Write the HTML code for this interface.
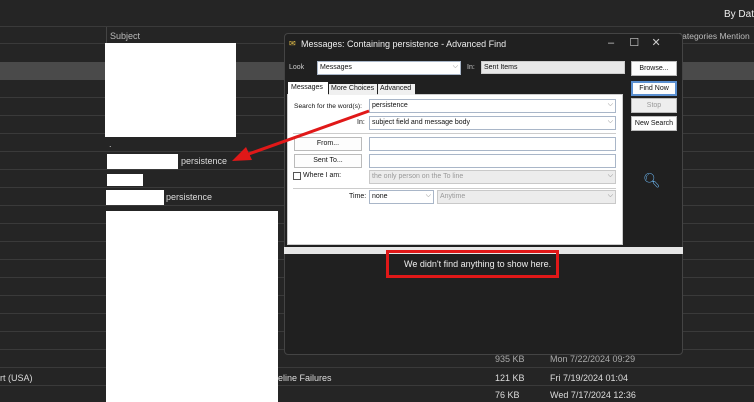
<!DOCTYPE html><html><head><style>
*{margin:0;padding:0;box-sizing:border-box}
body{width:754px;height:402px;background:#252525;position:relative;overflow:hidden;font-family:"Liberation Sans",sans-serif;font-size:9px;color:#ddd}
.a{position:absolute;white-space:nowrap}
.line{position:absolute;left:0;width:754px;height:1px;background:#3a3a3a}
.w{position:absolute;background:#fff}
.d{color:#111;font-size:7px}
.f{position:absolute;background:#fff;border:1px solid #a9b6c8;color:#111;font-size:7px;padding:1px 2px;line-height:10px;white-space:nowrap}
.g{background:#ececec;color:#999;border-color:#c9c9c9}
.b{position:absolute;background:#fdfdfd;border:1px solid #bbb;color:#111;font-size:7px;text-align:center;line-height:13px;white-space:nowrap}
.chev{position:absolute;right:2px;top:0;color:#777;font-size:7px}
</style></head><body>
<div class="a" style="right:0;top:9px;font-size:10px;color:#eee">By Dat</div>
<div class="line" style="top:26px"></div>
<div class="a" style="left:106px;top:27px;width:1px;height:16px;background:#444"></div>
<div class="a" style="left:110px;top:31px;color:#bbb">Subject</div>
<div class="a" style="left:676px;top:31px;color:#bbb;font-size:8.5px">Categories Mention</div>
<div class="line" style="top:43px"></div>
<div class="a" style="left:0;top:62px;width:754px;height:18px;background:#4a4a4a"></div>
<div class="line" style="top:97px"></div><div class="line" style="top:115px"></div><div class="line" style="top:133px"></div><div class="line" style="top:151px"></div><div class="line" style="top:169px"></div><div class="line" style="top:187px"></div><div class="line" style="top:205px"></div><div class="line" style="top:223px"></div><div class="line" style="top:241px"></div><div class="line" style="top:259px"></div><div class="line" style="top:277px"></div><div class="line" style="top:295px"></div><div class="line" style="top:313px"></div><div class="line" style="top:331px"></div><div class="line" style="top:349px"></div><div class="line" style="top:367px"></div><div class="line" style="top:385px"></div>
<div class="w" style="left:105px;top:43px;width:131px;height:94px"></div>
<div class="a" style="left:109px;top:139px;color:#ccc">.</div>
<div class="w" style="left:107px;top:154px;width:71px;height:15px"></div>
<div class="a" style="left:181px;top:156px">persistence</div>
<div class="w" style="left:107px;top:174px;width:36px;height:12px"></div>
<div class="w" style="left:106px;top:190px;width:58px;height:15px"></div>
<div class="a" style="left:166px;top:192px">persistence</div>
<div class="w" style="left:106px;top:211px;width:172px;height:191px"></div>
<div class="a" style="left:495px;top:354px;color:#aaa">935 KB</div>
<div class="a" style="left:550px;top:354px;color:#aaa">Mon 7/22/2024 09:29</div>
<div class="a" style="left:0;top:373px">rt (USA)</div>
<div class="a" style="left:278px;top:373px">eline Failures</div>
<div class="a" style="left:495px;top:373px">121 KB</div>
<div class="a" style="left:550px;top:373px">Fri 7/19/2024 01:04</div>
<div class="a" style="left:495px;top:390px">76 KB</div>
<div class="a" style="left:550px;top:390px">Wed 7/17/2024 12:36</div>
<!-- dialog -->
<div class="a" style="left:284px;top:33px;width:399px;height:322px;background:#202020;border:1px solid #444;border-radius:4px"></div>
<div class="a" style="left:289px;top:39px;color:#e6c04a;font-size:8px">✉</div>
<div class="a" style="left:301px;top:39px;color:#eee;font-size:9px">Messages: Containing persistence - Advanced Find</div>
<div class="a" style="left:608px;top:36px;color:#ccc;font-size:11px">–&nbsp;&nbsp;&nbsp;&nbsp;&nbsp;☐&nbsp;&nbsp;&nbsp;&nbsp;✕</div>
<div class="a" style="left:289px;top:64px;color:#ccc;font-size:7px">Look</div>
<div class="f" style="left:317px;top:61px;width:144px;height:14px">Messages<span class="chev">⌵</span></div>
<div class="a" style="left:467px;top:64px;color:#ccc;font-size:7px">In:</div>
<div class="f" style="left:481px;top:61px;width:144px;height:13px;background:#e8e8e8;border-color:#ccc">Sent Items</div>
<div class="b" style="left:631px;top:61px;width:46px;height:15px">Browse...</div>
<div class="a" style="left:287px;top:94px;width:336px;height:151px;background:#fff;border:1px solid #ccc"></div>
<div class="a d" style="left:288px;top:82px;width:40px;height:13px;background:#fff;padding:2px 3px">Messages</div>
<div class="a d" style="left:329px;top:84px;width:48px;height:11px;background:#f0f0f0;padding:1px 2px">More Choices</div>
<div class="a d" style="left:378px;top:84px;width:37px;height:11px;background:#f0f0f0;padding:1px 2px">Advanced</div>
<div class="a d" style="left:294px;top:103px;font-size:6.7px">Search for the word(s):</div>
<div class="f" style="left:369px;top:99px;width:247px;height:14px">persistence<span class="chev">⌵</span></div>
<div class="a d" style="left:357px;top:119px">In:</div>
<div class="f" style="left:369px;top:116px;width:247px;height:14px">subject field and message body<span class="chev">⌵</span></div>
<div class="a" style="left:293px;top:133px;width:323px;height:1px;background:#ccc"></div>
<div class="b" style="left:294px;top:137px;width:68px;height:14px;line-height:12px">From...</div>
<div class="f" style="left:369px;top:137px;width:247px;height:14px"></div>
<div class="b" style="left:294px;top:154px;width:68px;height:14px;line-height:12px">Sent To...</div>
<div class="f" style="left:369px;top:154px;width:247px;height:14px"></div>
<div class="a" style="left:293px;top:172px;width:8px;height:8px;border:1px solid #555;background:#fff"></div>
<div class="a d" style="left:303px;top:172px">Where I am:</div>
<div class="f g" style="left:369px;top:170px;width:247px;height:14px">the only person on the To line<span class="chev">⌵</span></div>
<div class="a" style="left:293px;top:188px;width:323px;height:1px;background:#ccc"></div>
<div class="a d" style="left:349px;top:193px">Time:</div>
<div class="f" style="left:369px;top:190px;width:65px;height:14px">none<span class="chev">⌵</span></div>
<div class="f g" style="left:437px;top:190px;width:179px;height:14px">Anytime<span class="chev">⌵</span></div>
<div class="b" style="left:631px;top:81px;width:46px;height:15px;border:2px solid #5a8fd0;line-height:11px">Find Now</div>
<div class="b" style="left:631px;top:98px;width:46px;height:15px;color:#999;background:#eee">Stop</div>
<div class="b" style="left:631px;top:116px;width:46px;height:15px">New Search</div>
<div class="a" style="left:643px;top:172px;font-size:14px;color:#6ab0e8">🔍︎</div>
<div class="a" style="left:284px;top:247px;width:399px;height:7px;background:#e6e6e6"></div>
<div class="a" style="left:386px;top:250px;width:173px;height:28px;border:3px solid #e01818"></div>
<div class="a" style="left:404px;top:259px;font-size:9px;color:#eee">We didn't find anything to show here.</div>
<svg class="a" style="left:0;top:0" width="754" height="402"><line x1="369" y1="111" x2="246" y2="155" stroke="#e01818" stroke-width="3"/><polygon points="232,161 246,147 252,160" fill="#e01818"/></svg>
</body></html>
